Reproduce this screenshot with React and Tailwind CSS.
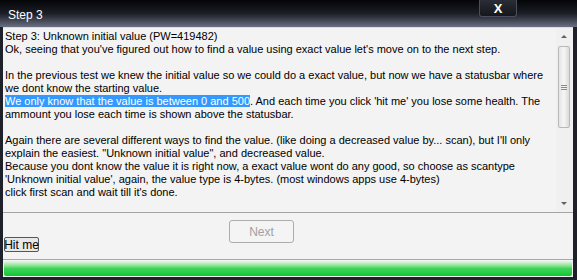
import React from 'react';

const lines = [
  { t: 'Step 3: Unknown initial value (PW=419482)' },
  { t: "Ok, seeing that you've figured out how to find a value using exact value let's move on to the next step." },
  { t: '' },
  { t: 'In the previous test we knew the initial value so we could do a exact value, but now we have a statusbar where' },
  { t: 'we dont know the starting value.' },
  { hl: 'We only know that the value is between 0 and 500', t: ". And each time you click 'hit me' you lose some health. The" },
  { t: 'ammount you lose each time is shown above the statusbar.' },
  { t: '' },
  { t: "Again there are several different ways to find the value. (like doing a decreased value by... scan), but I'll only" },
  { t: 'explain the easiest. "Unknown initial value", and decreased value.' },
  { t: 'Because you dont know the value it is right now, a exact value wont do any good, so choose as scantype' },
  { t: "'Unknown initial value', again, the value type is 4-bytes. (most windows apps use 4-bytes)" },
  { t: "click first scan and wait till it's done." },
];

const App = () => {
  return (
    <div className="w-[577px] h-[280px] bg-[#1e2129] flex flex-col font-['Liberation_Sans',Arial,sans-serif] overflow-hidden">
      {/* title bar */}
      <div className="relative h-[27px] shrink-0 bg-gradient-to-b from-[#050608] via-[#1c1f27] to-[#6b7184] flex items-center pl-[8px]">
        <span className="text-white text-[12px] leading-none mt-[2px]">Step 3</span>
        <div className="absolute left-[479px] top-0 w-[38px] h-[17px] rounded-b-[3px] border border-t-0 border-[#4a4e5a] bg-gradient-to-b from-[#2a2d35] to-[#15171c] flex items-center justify-center">
          <span className="text-white text-[13px] font-bold leading-none">X</span>
        </div>
      </div>

      <div className="flex-1 flex flex-col ml-[3px] mr-[4px] mb-[3px] bg-[#f3f3f3]">
        {/* memo */}
        <div className="h-[186px] shrink-0 flex border-b border-[#a3a3a3] border-t border-t-[#dcdcdc]">
          <div className="flex-1 min-w-0 overflow-hidden pl-[2px] pt-[2px] text-[11px] leading-[13px] text-black whitespace-pre">
            {lines.map((l, i) => (
              <div key={i} className="h-[13px]">
                {l.hl && <span className="bg-[#3399ff] text-white">{l.hl}</span>}
                {l.t}
              </div>
            ))}
          </div>
          {/* scrollbar */}
          <div className="w-[16px] shrink-0 mr-[1px] flex flex-col items-center bg-[#f0f0f0]">
            <div className="h-[17px] flex items-center justify-center">
              <div className="w-0 h-0 border-l-[3px] border-r-[3px] border-b-[3px] border-l-transparent border-r-transparent border-b-[#606060]" />
            </div>
            <div className="w-[12px] h-[82px] mt-[1px] rounded-[2px] border border-[#b8b8b8] bg-gradient-to-r from-[#e4e4e4] via-[#f6f6f6] to-[#dadada] flex flex-col items-center justify-center gap-[1px]">
              <div className="w-[6px] h-px bg-[#8a8a8a]" />
              <div className="w-[6px] h-px bg-[#8a8a8a]" />
              <div className="w-[6px] h-px bg-[#8a8a8a]" />
            </div>
            <div className="flex-1" />
            <div className="h-[17px] flex items-center justify-center">
              <div className="w-0 h-0 border-l-[3px] border-r-[3px] border-t-[3px] border-l-transparent border-r-transparent border-t-[#606060]" />
            </div>
          </div>
        </div>

        {/* buttons */}
        <div className="h-[46px] shrink-0 flex items-start">
          <button className="mt-[24px] ml-[1px] w-[35px] h-[15px] border border-[#555] rounded-[2px] bg-[#e8e8e8] text-[12px] leading-none text-black whitespace-nowrap flex items-center justify-center">
            Hit me
          </button>
          <button className="mt-[7px] ml-[190px] w-[65px] h-[23px] border border-[#adadad] rounded-[3px] bg-[#f4f4f4] text-[12px] text-[#a0a0a0] flex items-center justify-center">
            Next
          </button>
        </div>

        {/* status bar */}
        <div className="flex-1 border-t border-[#a8a8a8] pt-px px-px">
          <div className="h-[15px] rounded-[2px] bg-gradient-to-b from-[#e4f8e4] via-[#3fd35a] to-[#00c82e]" />
        </div>
      </div>
    </div>
  );
};

export default App;
